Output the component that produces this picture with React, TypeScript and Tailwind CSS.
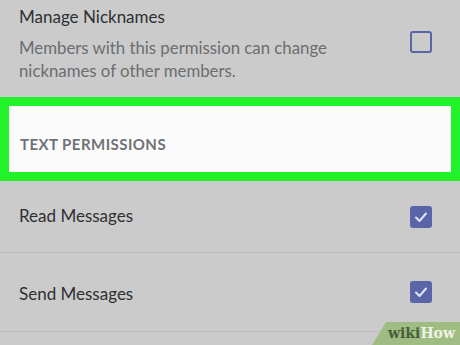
import React from "react";

function Checked() {
  return (
    <div className="w-[22px] h-[22px] rounded-[3px] bg-[#5a64a8] flex items-center justify-center">
      <svg width="16" height="16" viewBox="0 0 16 16" fill="none">
        <path d="M3 8.5 L6.5 12 L13 4.5" stroke="#dfe4f7" strokeWidth="2" strokeLinecap="round" strokeLinejoin="round" />
      </svg>
    </div>
  );
}

export default function App() {
  return (
    <div
      className="w-[460px] h-[345px] bg-[#cbcbcb] overflow-hidden relative"
      style={{ fontFamily: "Lato, 'Open Sans', sans-serif" }}
    >
      <div className="h-[97px] pl-[19px] pr-[28px] pt-[5px] flex justify-between">
        <div>
          <div className="text-[17px] leading-[24px] text-[#2f3033]">Manage Nicknames</div>
          <div className="mt-[7px] text-[16.8px] leading-[23px] text-[#6c6d70]">
            Members with this permission can change
            <br />
            nicknames of other members.
          </div>
        </div>
        <div className="mt-[26px] w-[22px] h-[22px] rounded-[3px] border-2 border-[#5a64a8]" />
      </div>
      <div className="h-[84px] border-[9px] border-[#22f22a] bg-[#fbfbfb] pl-[11px] pt-[28px]">
        <div className="text-[15px] leading-[20px] font-bold text-[#707174] tracking-[0.45px]">TEXT PERMISSIONS</div>
      </div>
      <div className="h-[72px] pl-[19px] pr-[28px] flex items-center justify-between border-b border-[#bdbdbd]">
        <div className="text-[17px] text-[#2f3033] mt-[-2px]">Read Messages</div>
        <Checked />
      </div>
      <div className="h-[79px] pl-[19px] pr-[28px] flex items-center justify-between border-b border-[#bdbdbd]">
        <div className="text-[17px] text-[#2f3033] mt-[3px]">Send Messages</div>
        <Checked />
      </div>
      <div className="absolute right-0 bottom-0 h-[23px] w-[88px] flex items-center justify-end pr-[5px] bg-[#9fbd83] [clip-path:polygon(14px_0,100%_0,100%_100%,0_100%)]">
        <span className="text-[14px] font-bold text-[#4a5e3a]" style={{ fontFamily: "'DejaVu Serif', serif" }}>wiki</span>
        <span className="text-[14px] font-bold text-[#eef3e6]" style={{ fontFamily: "'DejaVu Serif', serif" }}>How</span>
      </div>
    </div>
  );
}
